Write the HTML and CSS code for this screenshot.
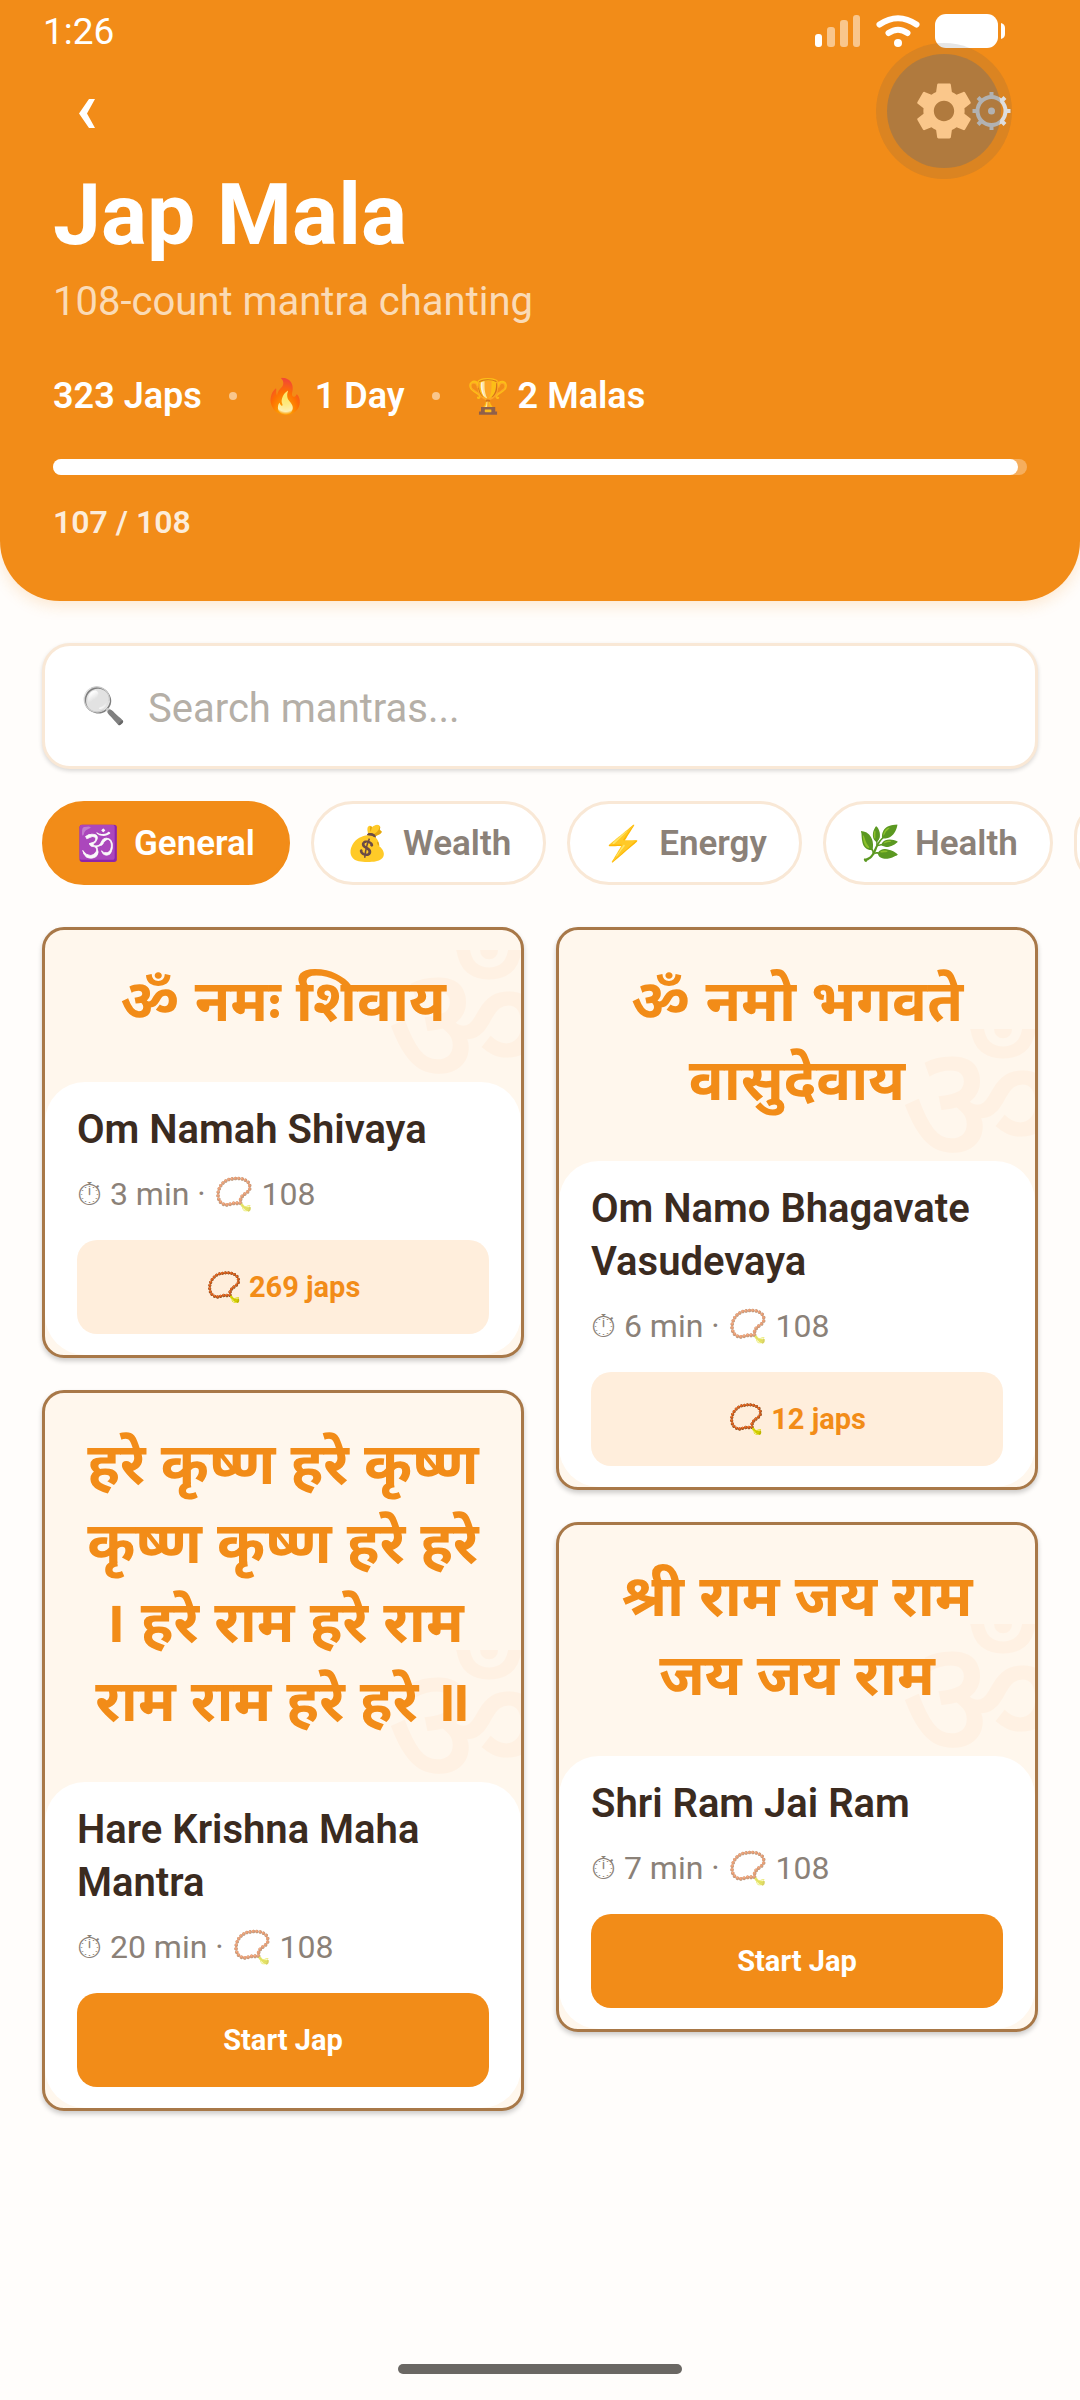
FILE: index.html
```
<!DOCTYPE html>
<html lang="en">
    <head>
        <meta charset="utf-8">
        <meta name="viewport" content="width=device-width, initial-scale=1">
        <title>Jap Mala</title>
        <link rel="stylesheet" href="styles.css">
    </head>
    <body>
        <header class="header">
            <div class="status-bar">
                <span class="time">1:26</span>
                <div class="status-icons">
                    <!-- signal -->
                    <svg width="46" height="34" viewBox="0 0 46 34">
                        <g fill="#fff">
                            <rect x="0" y="20" width="7" height="13" rx="3"/>
                            <rect x="12" y="13" width="8" height="20" rx="3" opacity="0.5"/>
                            <rect x="25" y="6" width="8" height="27" rx="3" opacity="0.5"/>
                            <rect x="38" y="1" width="7" height="32" rx="3" opacity="0.5"/>
                        </g>
                    </svg>
                    <!-- wifi -->
                    <svg width="44" height="34" viewBox="0 0 44 34">
                        <g fill="none" stroke="#fff" stroke-width="6" stroke-linecap="round">
                            <path d="M3.500 10.500Q22 -2 40.500 10.500"/>
                            <path d="M12.500 19Q22 12.500 31.500 19"/>
                        </g>
                        <circle cx="22" cy="29" r="4" fill="#fff"/>
                    </svg>
                    <!-- battery -->
                    <svg width="70" height="34" viewBox="0 0 70 34">
                        <rect width="63" height="34" rx="11" fill="#fff"/>
                        <path d="M66 9Q70 10 70 14V20Q70 24 66 25Z" fill="#fff"/>
                    </svg>
                </div>
            </div>

            <div class="nav-bar">
                <button type="button" class="back" aria-label="Back">
                    <svg width="16" height="29" viewBox="0 0 16 29"><path d="M0 14.500L10 0H16L8 14.500L16 29H10Z" fill="#fff"/></svg>
                </button>
                <button type="button" class="settings" aria-label="Settings">
                    <svg width="136" height="136" viewBox="-68 -68 136 136">
                        <g transform="translate(47.500 0)" stroke="#f6f6f6" fill="none">
                            <circle r="14" stroke-width="4"/>
                            <path stroke-width="4" d="M0 -15V-19M0 15V19M-15 0H-19M15 0H19M-10.500 -10.500L-13.500 -13.500M10.500 -10.500L13.500 -13.500M-10.500 10.500L-13.500 13.500M10.500 10.500L13.500 13.500"/>
                            <circle r="3.500" fill="#f6f6f6" stroke="none"/>
                        </g>
                        <circle r="68" fill="rgba(87,87,87,0.15)"/>
                        <circle r="57" fill="rgba(108,108,108,0.39)"/>
                        <path transform="scale(2.750) translate(-12 -12)" fill="#fac78b" d="M19.430 12.980c.04-.32.07-.64.07-.98s-.03-.66-.07-.98l2.110-1.650c.19-.15.24-.42.12-.64l-2-3.460c-.12-.22-.39-.3-.61-.22l-2.490 1c-.52-.4-1.080-.73-1.690-.98l-.38-2.650C14.460 2.180 14.250 2 14 2h-4c-.25 0-.46.18-.49.42l-.38 2.650c-.61.25-1.170.59-1.690.98l-2.490-1c-.23-.09-.49 0-.61.22l-2 3.460c-.13.22-.07.49.12.64l2.110 1.650c-.04.32-.07.65-.07.98s.03.66.07.98l-2.110 1.650c-.19.15-.24.42-.12.64l2 3.460c.12.22.39.3.61.22l2.490-1c.52.4 1.080.73 1.690.98l.38 2.650c.03.24.24.42.49.42h4c.25 0 .46-.18.49-.42l.38-2.650c.61-.25 1.170-.59 1.690-.98l2.490 1c.23.09.49 0 .61-.22l2-3.460c.12-.22.07-.49-.12-.64l-2.110-1.650zM12 15.700c-2.040 0-3.700-1.660-3.700-3.700s1.660-3.700 3.700-3.700 3.700 1.660 3.700 3.700-1.660 3.700-3.700 3.700z"/>
                    </svg>
                </button>
            </div>

            <h1>Jap Mala</h1>
            <p class="subtitle">108-count mantra chanting</p>

            <div class="stats">
                <span>323 Japs</span>
                <span class="dot"></span>
                <span><span class="emoji">🔥</span> 1 Day</span>
                <span class="dot"></span>
                <span><span class="emoji">🏆</span> 2 Malas</span>
            </div>

            <div class="progress"><div class="progress-fill" style="width: 99.07%"></div></div>
            <p class="progress-text">107 / 108</p>
        </header>

        <main>
            <label class="search">
                <span class="search-icon">🔍</span>
                <input type="text" placeholder="Search mantras..." aria-label="Search mantras">
            </label>

            <div class="chips">
                <button type="button" class="chip active"><span>🕉️</span>General</button>
                <button type="button" class="chip"><span>💰</span>Wealth</button>
                <button type="button" class="chip"><span>⚡</span>Energy</button>
                <button type="button" class="chip"><span>🌿</span>Health</button>
                <button type="button" class="chip" aria-label="More"></button>
            </div>

            <div class="columns">
                <div class="column">
                    <article class="card">
                        <div class="card-top" lang="hi">
                            <span class="om" aria-hidden="true">ॐ</span>
                            <p class="mantra">ॐ नमः शिवाय</p>
                        </div>
                        <div class="card-body">
                            <h2>Om Namah Shivaya</h2>
                            <p class="meta">⏱ 3 min · <span class="mala faded">📿</span> 108</p>
                            <button type="button" class="japs"><span class="mala">📿</span> 269 japs</button>
                        </div>
                    </article>
                    <article class="card">
                        <div class="card-top" lang="hi">
                            <span class="om" aria-hidden="true">ॐ</span>
                            <p class="mantra">हरे कृष्ण हरे कृष्ण कृष्ण कृष्ण हरे हरे । हरे राम हरे राम राम राम हरे हरे ॥</p>
                        </div>
                        <div class="card-body">
                            <h2>Hare Krishna Maha Mantra</h2>
                            <p class="meta">⏱ 20 min · <span class="mala faded">📿</span> 108</p>
                            <button type="button" class="start">Start Jap</button>
                        </div>
                    </article>
                </div>
                <div class="column">
                    <article class="card">
                        <div class="card-top" lang="hi">
                            <span class="om" aria-hidden="true">ॐ</span>
                            <p class="mantra">ॐ नमो भगवते वासुदेवाय</p>
                        </div>
                        <div class="card-body">
                            <h2>Om Namo Bhagavate Vasudevaya</h2>
                            <p class="meta">⏱ 6 min · <span class="mala faded">📿</span> 108</p>
                            <button type="button" class="japs"><span class="mala">📿</span> 12 japs</button>
                        </div>
                    </article>
                    <article class="card">
                        <div class="card-top" lang="hi">
                            <span class="om" aria-hidden="true">ॐ</span>
                            <p class="mantra">श्री राम जय राम जय जय राम</p>
                        </div>
                        <div class="card-body">
                            <h2>Shri Ram Jai Ram</h2>
                            <p class="meta">⏱ 7 min · <span class="mala faded">📿</span> 108</p>
                            <button type="button" class="start">Start Jap</button>
                        </div>
                    </article>
                </div>
            </div>
        </main>

        <div class="home-bar"></div>
    </body>
</html>
```

FILE: styles.css
```
* {
    box-sizing: border-box;
}
body {
    margin: 0;
    min-height: 100vh;
    display: flex;
    flex-direction: column;
    background-color: #fffdfb;
    font-family: Roboto, "Noto Sans", "Noto Sans Devanagari", sans-serif;
    overflow-x: hidden;
}
h1, h2, p {
    margin: 0;
}
button {
    font-family: inherit;
    border: none;
    cursor: pointer;
}
svg {
    display: block;
}

/* header */
.header {
    background-color: #f28c18;
    color: white;
    padding: 8px 53px 56px;
    border-radius: 0 0 60px 60px;
    box-shadow: 0 4px 16px rgba(242, 140, 24, 0.2);
}
.status-bar {
    display: flex;
    justify-content: space-between;
    align-items: center;
    height: 46px;
    margin: 0 22px 0 -10px;
}
.time {
    font-size: 37px;
}
.status-icons {
    display: flex;
    gap: 15px;
}
.nav-bar {
    display: flex;
    justify-content: space-between;
    align-items: center;
    height: 114px;
}
.back {
    background: none;
    padding: 25px 26px 20px;
}
.settings {
    background: none;
    padding: 0;
    margin-right: 15px;
}
h1 {
    font-size: 86px;
    line-height: 94px;
    font-weight: bold;
}
.subtitle {
    font-size: 40px;
    line-height: 56px;
    margin-top: 12px;
    color: rgba(255, 255, 255, 0.7);
}
.stats {
    display: flex;
    align-items: center;
    gap: 27px;
    margin-top: 42px;
    font-size: 36px;
    line-height: 48px;
    font-weight: 600;
}
.dot {
    width: 8px;
    height: 8px;
    border-radius: 50%;
    background-color: rgba(255, 255, 255, 0.5);
}
.emoji {
    font-size: 34px;
    opacity: 0.9;
}
.progress {
    height: 16px;
    margin-top: 39px;
    border-radius: 8px;
    background-color: rgba(255, 255, 255, 0.3);
}
.progress-fill {
    height: 100%;
    border-radius: 8px;
    background-color: white;
}
.progress-text {
    margin-top: 24px;
    font-size: 32px;
    line-height: 46px;
    font-weight: 600;
    color: rgba(255, 255, 255, 0.85);
}

main {
    padding: 42px 42px 0;
}

/* search box */
.search {
    display: flex;
    align-items: center;
    gap: 22px;
    height: 126px;
    padding: 0 36px;
    background-color: white;
    border: 3px solid #f9e8d6;
    border-radius: 28px;
    box-shadow: 0 2px 4px rgba(0, 0, 0, 0.15);
}
.search-icon {
    font-size: 36px;
    filter: grayscale(1);
    opacity: 0.8;
}
.search input {
    flex: 1;
    min-width: 0;
    border: none;
    outline: none;
    background: none;
    padding: 4px 0 0;
    font-family: inherit;
    font-size: 40px;
    color: #3b2b1f;
}
.search input::placeholder {
    color: #b5afa7;
    opacity: 1;
}

.chips {
    display: flex;
    gap: 21px;
    margin: 32px -42px 0 0;
    overflow: hidden;
}
.chip {
    display: flex;
    flex-shrink: 0;
    align-items: center;
    gap: 15px;
    height: 84px;
    padding: 0 32px;
    border: 3px solid #f9e8d6;
    border-radius: 42px;
    background-color: white;
    color: #8b8178;
    font-size: 35px;
    font-weight: 600;
}
.chip span {
    font-size: 34px;
}
.chip.active {
    background-color: #f28c18;
    border-color: #f28c18;
    color: white;
}

/* mantra cards */
.columns {
    display: flex;
    align-items: flex-start;
    gap: 32px;
    margin-top: 42px;
}
.column {
    flex: 1;
    min-width: 0;
    display: flex;
    flex-direction: column;
    gap: 32px;
}
.card {
    overflow: hidden;
    background-color: #fff7ed;
    border: 3px solid #a87848;
    border-radius: 22px;
    box-shadow: 0 3px 5px rgba(0, 0, 0, 0.2);
}
.card-top {
    position: relative;
    padding: 38px 40px 35px;
    text-align: center;
}
.mantra {
    position: relative;
    font-family: "Noto Sans Devanagari", "Noto Sans", sans-serif;
    font-size: 58px;
    line-height: 79px;
    font-weight: bold;
    color: #f28c18;
}
.om {
    position: absolute;
    right: -24px;
    bottom: 0;
    height: 132px;
    overflow: hidden;
    font-family: "Noto Sans Devanagari", "Noto Sans", sans-serif;
    font-size: 168px;
    line-height: 186px;
    font-weight: 500;
    color: #fff1e3;
}
.card-body {
    padding: 21px 32px;
    background-color: white;
    border-radius: 40px;
}
h2 {
    font-size: 40px;
    line-height: 53px;
    font-weight: 600;
    color: #3b2b1f;
}
.meta {
    margin-top: 16px;
    font-size: 32px;
    line-height: 44px;
    color: #8b8178;
}
.mala {
    filter: hue-rotate(14deg) saturate(1.2);
}
.meta .faded {
    opacity: 0.6;
}
.japs, .start {
    display: block;
    width: 100%;
    height: 94px;
    margin-top: 24px;
    border-radius: 20px;
    font-size: 29px;
    font-weight: bold;
}
.japs {
    background-color: #ffeedc;
    color: #f28c18;
}
.start {
    background-color: #f28c18;
    color: white;
}

.home-bar {
    width: 284px;
    height: 10px;
    margin: auto auto 26px;
    border-radius: 5px;
    background-color: #6a6763;
}
```
